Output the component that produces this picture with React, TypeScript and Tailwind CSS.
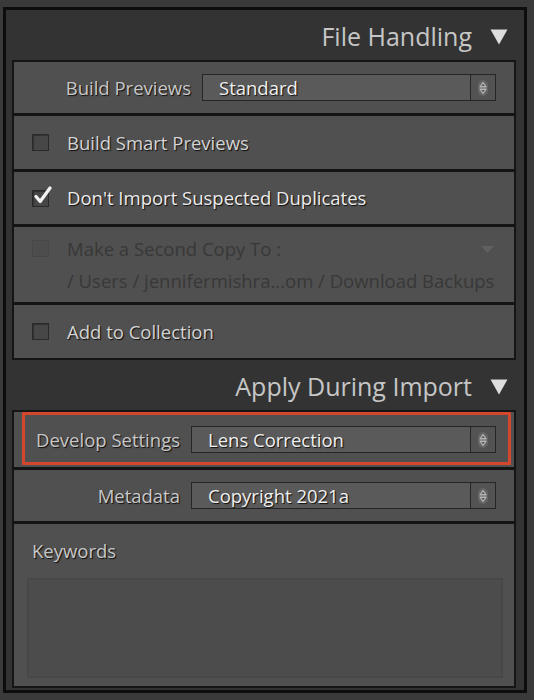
import type { ReactNode } from "react";

const font = "font-['Open_Sans','Noto_Sans',sans-serif]";
const shadow = "[text-shadow:1px_1px_1px_rgba(0,0,0,0.85)]";

function Stepper() {
  return (
    <svg width="12" height="18" viewBox="0 0 12 18" fill="none">
      <rect x="1" y="1" width="10" height="16" rx="5" fill="#646464" />
      <path d="M3 7.5 L6 3.5 L9 7.5 Z" stroke="#b4b4b4" strokeWidth="1.2" strokeLinejoin="round" />
      <path d="M3 10.5 L6 14.5 L9 10.5 Z" stroke="#b4b4b4" strokeWidth="1.2" strokeLinejoin="round" />
      <path d="M2.5 9 H9.5" stroke="#b4b4b4" strokeWidth="1" />
    </svg>
  );
}

function Dropdown({ value }: { value: string }) {
  return (
    <div className="flex h-[27px] flex-1 border border-[#262626] bg-[#5a5a5a]">
      <div className={`flex flex-1 items-center pl-4 text-[18.5px] text-[#f0f0f0] ${shadow}`}>{value}</div>
      <div className="flex w-[25px] items-center justify-center border-l border-[#262626] bg-[#535353]">
        <Stepper />
      </div>
    </div>
  );
}

function Checkbox({ checked = false, disabled = false }: { checked?: boolean; disabled?: boolean }) {
  return (
    <div className="relative h-[17px] w-[17px] shrink-0">
      <div
        className={
          disabled
            ? "h-full w-full border border-[#474747] bg-[#4d4d4d]"
            : "h-full w-full border border-[#2a2a2a] bg-[#474747] shadow-[inset_1px_1px_1px_rgba(0,0,0,0.3)]"
        }
      />
      {checked && (
        <svg className="absolute left-[2px] top-[-4px]" width="18" height="19" viewBox="0 0 18 19">
          <path
            d="M2 10.5 L6.2 15.5 L16 2"
            fill="none"
            stroke="#f2f2f2"
            strokeWidth="3.2"
            strokeLinecap="round"
            strokeLinejoin="round"
          />
        </svg>
      )}
    </div>
  );
}

function Header({ title }: { title: string }) {
  return (
    <div className="flex h-[50px] items-center justify-end gap-[18px] pr-[8px] pt-[3px]">
      <span className="text-[25px] leading-none text-[#c6c6c6]">{title}</span>
      <svg width="18" height="16" viewBox="0 0 18 16">
        <path d="M0.5 0.5 H17.5 L9 15.5 Z" fill="#dedede" />
      </svg>
    </div>
  );
}

function CheckRow({ label, checked }: { label: string; checked?: boolean }) {
  return (
    <div className="flex h-[53px] items-center gap-[18px] bg-[#505050] pl-[18px]">
      <Checkbox checked={checked} />
      <span className={`text-[18.5px] text-[#d4d4d4] ${shadow}`}>{label}</span>
    </div>
  );
}

function Divider() {
  return <div className="h-[3px] bg-[#141414]" />;
}

function LabelRow({ label, width, height, children }: { label: string; width: string; height: string; children: ReactNode }) {
  return (
    <div className={`flex ${height} items-center bg-[#505050] pr-[18px]`}>
      <span className={`${width} shrink-0 pr-[11px] text-right text-[18.5px] text-[#c8c8c8] ${shadow}`}>{label}</span>
      {children}
    </div>
  );
}

export default function App() {
  return (
    <div className={`h-[700px] w-[534px] overflow-hidden bg-[#3a3a3a] pb-[7px] pl-[3px] pr-[7px] pt-[7px] ${font}`}>
      <div className="flex h-full flex-col border-[3px] border-[#0d0d0d] bg-[#333333] pl-[6px] pr-[8px]">
        <Header title="File Handling" />

        <div className="flex h-[300px] flex-col border-2 border-[#151515]">
          <LabelRow label="Build Previews" width="w-[188px]" height="h-[51px]">
            <Dropdown value="Standard" />
          </LabelRow>
          <Divider />
          <CheckRow label="Build Smart Previews" />
          <Divider />
          <div className="flex h-[52px] items-center gap-[18px] bg-[#505050] pl-[18px]">
            <Checkbox checked />
            <span className={`text-[18.5px] text-[#ececec] ${shadow}`}>Don't Import Suspected Duplicates</span>
          </div>
          <Divider />
          <div className="flex h-[75px] gap-[18px] bg-[#505050] pl-[18px] pr-[28px] pt-[11px]">
            <div className="pt-[2px]">
              <Checkbox disabled />
            </div>
            <div className="flex flex-1 flex-col items-start text-left text-[18.5px] text-[#383838]">
              <div className="flex w-full items-center justify-between">
                <span className="leading-[22px]">Make a Second Copy To :</span>
                <svg width="13" height="7" viewBox="0 0 13 7">
                  <path d="M0 0 H13 L6.5 7 Z" fill="#606060" />
                </svg>
              </div>
              <span className="mt-[9px] whitespace-nowrap leading-[24px]">/ Users / jennifermishra...om / Download Backups</span>
            </div>
          </div>
          <Divider />
          <div className="flex flex-1 items-center gap-[18px] bg-[#505050] pl-[18px]">
            <Checkbox />
            <span className={`text-[18.5px] text-[#d4d4d4] ${shadow}`}>Add to Collection</span>
          </div>
        </div>

        <Header title="Apply During Import" />

        <div className="flex h-[278px] flex-col border-2 border-[#151515]">
          <div className="relative">
            <LabelRow label="Develop Settings" width="w-[177px]" height="h-[55px]">
              <Dropdown value="Lens Correction" />
            </LabelRow>
            <div className="absolute bottom-[2px] left-[8px] right-[3px] top-0 border-[3px] border-[#d4462d]" />
          </div>
          <Divider />
          <LabelRow label="Metadata" width="w-[177px]" height="h-[51px]">
            <Dropdown value="Copyright 2021a" />
          </LabelRow>
          <Divider />
          <div className="flex flex-1 flex-col bg-[#505050] pb-[8px] pl-[13px] pr-[11px]">
            <div className={`flex h-[54px] items-center pl-[5px] text-[18.5px] text-[#c8c8c8] ${shadow}`}>Keywords</div>
            <div className="flex-1 border-2 border-[#474747] bg-[#4c4c4c]" />
          </div>
        </div>
      </div>
    </div>
  );
}
